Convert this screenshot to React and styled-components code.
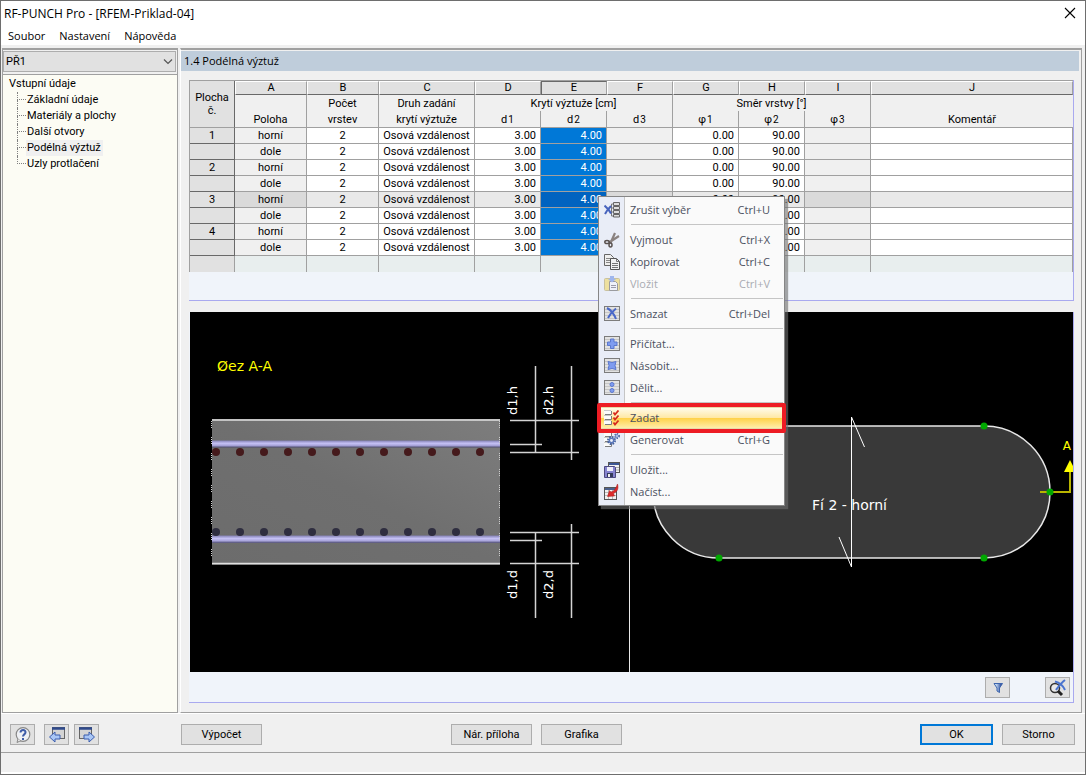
import React, { useState } from 'react';
import styled, { createGlobalStyle } from 'styled-components';

const UI = "Roboto, 'Liberation Sans', sans-serif";
const MENU = "'Open Sans', 'Noto Sans', sans-serif";

const GlobalStyle = createGlobalStyle`
  * {
    box-sizing: border-box;
  }

  body {
    margin: 0;
    background: #f0f0f0;
    color: #000;
    font-family: ${UI};
    font-size: 11px;
  }

  button, select {
    font: inherit;
    color: inherit;
  }
`;

const Window = styled.div`
  position: relative;
  display: flex;
  flex-direction: column;
  min-height: 100vh;
  border: 1px solid #6e6e6e;
  background: #f0f0f0;
`;

const TitleBar = styled.header`
  display: flex;
  align-items: center;
  justify-content: space-between;
  height: 24px;
  padding: 0 9px 0 3px;
  background: #fff;
`;

const Title = styled.h1`
  margin: 0;
  font-family: ${MENU};
  font-size: 12px;
  font-weight: 400;
`;

const CloseButton = styled.button`
  display: flex;
  padding: 0;
  border: 0;
  background: none;
`;

const MenuBar = styled.nav`
  display: flex;
  gap: 14px;
  height: 20px;
  padding: 0 7px;
  background: #fff;

  button {
    padding: 0;
    border: 0;
    background: none;
    font-family: ${MENU};
    font-size: 11px;
  }
`;

const Body = styled.div`
  display: flex;
  flex: 1;
  gap: 2px;
  padding: 3px 3px 0 1px;
`;

const Sidebar = styled.aside`
  display: flex;
  flex-direction: column;
  width: 176px;
  border: 1px solid #a0a0a0;
  border-top-width: 2px;
  background: #f0f0f0;
`;

const CaseBox = styled.div`
  position: relative;
  height: 21px;
  margin: 1px 1px 2px 0;

  svg {
    position: absolute;
    right: 3px;
    top: 7px;
    pointer-events: none;
  }
`;

const CaseSelect = styled.select`
  width: 100%;
  height: 100%;
  padding: 0 2px;
  border: 1px solid #adadad;
  border-radius: 0;
  background: #e1e1e1;
  appearance: none;
`;

const Tree = styled.div`
  flex: 1;
  padding: 1px 6px;
  border-top: 1px solid #a0a0a0;
  background: #fcfcf4;
`;

const TreeRoot = styled.div`
  line-height: 16px;
`;

const TreeList = styled.ul`
  margin: 0;
  padding: 0 0 0 8px;
  list-style: none;
`;

const TreeItem = styled.li`
  display: grid;
  grid-template-columns: 9px auto;
  grid-template-rows: 8px 8px;
  justify-content: start;

  &::before {
    content: '';
    border-left: 1px dotted #808080;
    border-bottom: 1px dotted #808080;
  }

  &:not(:last-child)::after {
    content: '';
    grid-column: 1;
    grid-row: 2;
    border-left: 1px dotted #808080;
  }

  button {
    grid-column: 2;
    grid-row: 1 / 3;
    padding: 0 2px 0 1px;
    border: 0;
    background: ${({ $active }) => ($active ? '#f0f0f0' : 'transparent')};
    line-height: 16px;
    white-space: nowrap;
  }
`;

const Panel = styled.main`
  display: flex;
  flex: 1;
  flex-direction: column;
  min-width: 0;
  border: 1px solid #a0a0a0;
  border-top-width: 2px;
  border-left-color: #fff;
`;

const PanelTitle = styled.h2`
  margin: 1px 2px 9px 0;
  padding: 0 3px;
  background: #bfcddb;
  font-family: ${MENU};
  font-size: 11px;
  font-weight: 400;
  line-height: 20px;
`;

const Frame = styled.section`
  display: flex;
  flex-direction: column;
  flex: ${({ $grow }) => ($grow ? 1 : 'none')};
  margin: 0 7px ${({ $grow }) => ($grow ? 9 : 11)}px 8px;
  border: solid #a9a9ef;
  border-width: 0 1px 1px 0;
  background: #f0f4fa;
`;

const Table = styled.table`
  width: 100%;
  border-left: 1px solid #a0a0a0;
  border-top: 1px solid #a0a0a0;
  border-collapse: separate;
  border-spacing: 0;
  table-layout: fixed;
  font-size: 11px;
  line-height: 15px;
`;

const Letter = styled.th`
  height: 14px;
  padding: 0;
  border: 1px solid;
  border-color: ${({ $pressed }) =>
    $pressed ? '#696969 #a0a0a0 #696969 #696969' : '#fff #a0a0a0 #696969 #fff'};
  background: #e1e1e1;
  font-weight: 400;
  line-height: 12px;
`;

const Corner = styled.th`
  padding: 0;
  border-right: 1px solid #696969;
  border-bottom: 1px solid #a0a0a0;
  background: #e1e1e1;
  font-weight: 400;
  line-height: 13px;
`;

const Head = styled.th`
  height: ${({ $last }) => ($last ? 17 : 16)}px;
  padding: 0;
  border-right: ${({ $open }) => ($open ? 0 : '1px solid #a0a0a0')};
  border-bottom: ${({ $last }) => ($last ? '1px solid #a0a0a0' : 0)};
  background: #f0f0f0;
  font-weight: 400;
  line-height: 15px;
  white-space: nowrap;

  small {
    padding-left: 1px;
    font-size: 10px;
    line-height: 1;
  }
`;

const RowHead = styled.th`
  height: 16px;
  padding: 0;
  border-right: 1px solid #696969;
  border-bottom: 1px solid #696969;
  background: #e1e1e1;
  font-weight: 400;
`;

const cellColor = ({ $kind, $current }) => {
  if ($kind === 'selected') return $current ? '#0063c0' : '#0078d7';
  if ($kind === 'locked') return $current ? '#dadada' : '#f0f0f0';
  if ($kind === 'blank') return '#e8eeee';
  return $current ? '#e9e9e9' : '#fff';
};

const Cell = styled.td`
  height: 16px;
  padding: 0 4px;
  border-right: 1px solid #a0a0a0;
  border-bottom: ${({ $kind }) => ($kind === 'blank' ? 0 : '1px solid #a0a0a0')};
  background: ${cellColor};
  color: ${({ $kind }) => ($kind === 'selected' ? '#fff' : '#000')};
  text-align: ${({ $right }) => ($right ? 'right' : 'center')};
  white-space: nowrap;
`;

const BlankHead = styled(RowHead)`
  border-color: #a0a0a0;
  border-bottom: 0;
`;

const Strip = styled.div`
  height: 28px;
`;

const Graphics = styled.div`
  display: flex;
  flex: 1;
  min-height: 320px;
  margin-left: 1px;
  background: #000;

  svg {
    display: block;
    height: 100%;
    font-family: 'DejaVu Sans', sans-serif;
    font-size: 14px;
  }
`;

const SectionView = styled.div`
  width: 440px;
  border-right: 1px solid #e8e8e8;
`;

const PlanView = styled.div`
  flex: 1;
  min-width: 0;
`;

const GraphicsBar = styled.div`
  display: flex;
  justify-content: flex-end;
  gap: 35px;
  padding: 5px 3px 4px;
`;

const Button = styled.button`
  display: flex;
  align-items: center;
  justify-content: center;
  width: ${({ $width }) => $width || 81}px;
  height: 21px;
  padding: 0;
  border: ${({ $primary }) => ($primary ? '2px solid #0078d7' : '1px solid #adadad')};
  background: #e1e1e1;
`;

const Footer = styled.footer`
  display: flex;
  gap: 9px;
  padding: 10px 10px 7px 9px;
  border-bottom: 1px solid #a0a0a0;
  border-top: 1px solid #fff;
`;

const Group = styled.div`
  display: flex;
  gap: ${({ $gap }) => $gap || 9}px;
  margin-left: ${({ $left }) => $left || 0};
`;

const StatusBar = styled.div`
  height: 21px;
  border-bottom: 2px solid #fff;
`;

const ContextMenu = styled.ul`
  position: absolute;
  left: 597px;
  top: 195px;
  width: 187px;
  margin: 0;
  padding: 2px 1px;
  border: 1px solid #868686;
  background: linear-gradient(to right, #e9edf7 25px, #c5c5c5 25px, #c5c5c5 26px, #fafafa 26px);
  box-shadow: 3px 3px 1px rgba(110, 110, 110, 0.6);
  font-family: ${MENU};
  list-style: none;
`;

const Separator = styled.li`
  height: 8px;
  margin-left: 31px;
  padding-top: 3px;

  &::after {
    content: '';
    display: block;
    height: 1px;
    background: #c5c5c5;
  }
`;

const MenuEntry = styled.li`
  position: relative;

  button {
    display: grid;
    grid-template-columns: 26px 1fr auto;
    align-items: center;
    width: 100%;
    height: 22px;
    padding: 0 13px 0 4px;
    border: 0;
    background: ${({ $hot }) =>
      $hot
        ? 'linear-gradient(#fffdf0, #ffe9a6 48%, #ffd24a 52%, #fff0b5)'
        : 'transparent'};
    box-shadow: ${({ $hot }) => ($hot ? 'inset 0 0 0 1px #e8d9a8' : 'none')};
    color: #4a5060;
    font-size: 11px;
    text-align: left;
  }

  button > span {
    padding-bottom: 2px;
  }

  button:disabled {
    color: #a9abb2;
  }

  button:disabled svg {
    opacity: 0.6;
  }
`;

const Highlight = styled.span`
  position: absolute;
  inset: -4px -3px;
  border: 4px solid #ed1c24;
  border-radius: 2px;
  pointer-events: none;
  z-index: 1;
`;

const svg16 = { width: 16, height: 16, viewBox: '0 0 16 16', 'aria-hidden': true };

const Sheet = ({ children }) => (
  <svg {...svg16}>
    <rect x="0.5" y="0.5" width="15" height="14" fill="#e2e2e2" stroke="#7c7c7c" />
    <path d="M1 3.500h14M1 6.500h14M1 9.500h14M1 12.500h14" stroke="#c6c6c6" />
    {children}
  </svg>
);

const Rows = () => (
  <>
    <path d="M0 0.500h7.500v4H0zM0 5.500h7.500v4H0zM0 10.500h7.500v4H0z" fill="#fbfbfb" />
    <path d="M0 0.500h7M0 5.500h7M0 10.500h7" stroke="#c9c9c9" />
    <path d="M1 4.500h6.500V1M1 9.500h6.500V6M1 14.500h6.500V11" fill="none" stroke="#7d7d7d" />
  </>
);

const icons = {
  clear: (
    <svg {...svg16}>
      <path d="M15.500 0.500H9.500v3h6zM15.500 4.500H9.500v3h6zM15.500 8.500H9.500v3h6zM15.500 12.500H9.500v2.500h6z" fill="#ddd" stroke="#666" />
      <path d="M9 2H7.500v12H9M7.500 6H9M7.500 10H9" fill="none" stroke="#777" />
      <path d="M0.500 3.500c2.500 2 5 5 6.500 8M7 4C5 6 3 8 1 12" fill="none" stroke="#4763bd" strokeWidth="2" />
    </svg>
  ),
  cut: (
    <svg {...svg16}>
      <path d="M5 10.500L15 4M6.500 11L11 1" stroke="#8a8280" strokeWidth="2.200" fill="none" />
      <ellipse cx="3" cy="10" rx="2.200" ry="1.600" fill="none" stroke="#59514f" strokeWidth="1.500" />
      <ellipse cx="6.500" cy="13" rx="1.500" ry="2" fill="none" stroke="#59514f" strokeWidth="1.500" />
    </svg>
  ),
  copy: (
    <svg {...svg16}>
      <path d="M0.500 0.500h6l3 3v8h-9z" fill="#eee" stroke="#666" />
      <path d="M2 4.500h5M2 6.500h5M2 8.500h4" stroke="#888" />
      <path d="M6.500 4.500h6l3 3v8h-9z" fill="#f3f3f3" stroke="#555" />
      <path d="M12.500 4.500v3h3M8 9.500h6M8 11.500h6M8 13.500h6" fill="none" stroke="#777" />
    </svg>
  ),
  paste: (
    <svg {...svg16}>
      <rect x="0.500" y="2.500" width="15" height="12" rx="1" fill="#f0d866" stroke="#b3a567" />
      <path d="M5.500 5.500h6l2 2v7h-8z" fill="#f4f6fb" stroke="#666" />
      <path d="M7 9.500h5M7 11.500h5" stroke="#667" />
      <path d="M6 0h4v3h2L8 6.500 4 3h2z" fill="#6f92e8" />
    </svg>
  ),
  erase: (
    <Sheet>
      <path d="M3 2c4 2 7 6 9 11M12 2.500C9 5 6 8 4 12" fill="none" stroke="#4a68c8" strokeWidth="2" />
    </Sheet>
  ),
  add: (
    <Sheet>
      <path d="M6.500 3h3.500v3h3v3.500h-3v3H6.500v-3h-3V6h3z" fill="#7f9cf0" stroke="#5b78cf" />
    </Sheet>
  ),
  multiply: (
    <Sheet>
      <path d="M4 3.500l4 1 4-1-1 4 1 4-4-1-4 1 1-4z" fill="#7f9cf0" stroke="#5b78cf" strokeLinejoin="round" />
    </Sheet>
  ),
  divide: (
    <Sheet>
      <circle cx="8" cy="4.500" r="2" fill="#7f9cf0" stroke="#5b78cf" />
      <circle cx="8" cy="10.500" r="2" fill="#7f9cf0" stroke="#5b78cf" />
    </Sheet>
  ),
  set: (
    <svg {...svg16}>
      <Rows />
      <path d="M9.500 2.500l1.500 2 3.500-4M9.500 7.500l1.500 2 3.500-4M9.500 12.500l1.500 2 3.500-4" fill="none" stroke="#d8291e" strokeWidth="1.800" />
    </svg>
  ),
  generate: (
    <svg {...svg16}>
      <Rows />
      <circle cx="7.500" cy="8.500" r="3.500" fill="none" stroke="#45629f" strokeWidth="2" strokeDasharray="1.600 1.150" />
      <circle cx="7.500" cy="8.500" r="2.200" fill="#eef2fb" stroke="#5a77ba" strokeWidth="1.500" />
      <circle cx="13" cy="4" r="2.200" fill="none" stroke="#45629f" strokeWidth="1.500" strokeDasharray="1.200 1.100" />
      <circle cx="13" cy="4" r="1.400" fill="#eef2fb" stroke="#5a77ba" />
    </svg>
  ),
  save: (
    <svg {...svg16}>
      <rect x="4.500" y="0.500" width="11" height="10" fill="#f2f2f2" stroke="#555" />
      <path d="M5 2h10" stroke="#3d5794" strokeWidth="2" />
      <path d="M11 5.500h4M11 8h4" stroke="#aaa" />
      <path d="M0.500 4.500h10l1 1v10h-11z" fill="#8583cf" stroke="#4d4a80" />
      <rect x="3" y="5" width="6" height="4" fill="#eeeefa" />
      <rect x="3" y="11" width="6" height="4" fill="#333a5a" />
      <rect x="4" y="12" width="2" height="3" fill="#eee" />
    </svg>
  ),
  load: (
    <svg {...svg16}>
      <rect x="0.500" y="3.500" width="12" height="12" fill="#f2f2f2" stroke="#555" />
      <path d="M1 5h11" stroke="#4a5f8c" strokeWidth="2" />
      <path d="M1 8.500h11M1 11.500h11M4.500 6v9M8.500 6v9" stroke="#bbb" />
      <path d="M13.500 0c1.500 5-.5 8-4 9.500l1 2.500-7 .5L5.500 6.500 7 8c3.500-1 5-4 6.500-8z" fill="#dc2b2b" stroke="#a51c1c" strokeWidth="0.500" />
    </svg>
  ),
};

const menuItems = [
  { icon: 'clear', label: 'Zrušit výběr', keys: 'Ctrl+U' },
  null,
  { icon: 'cut', label: 'Vyjmout', keys: 'Ctrl+X' },
  { icon: 'copy', label: 'Kopírovat', keys: 'Ctrl+C' },
  { icon: 'paste', label: 'Vložit', keys: 'Ctrl+V', disabled: true },
  null,
  { icon: 'erase', label: 'Smazat', keys: 'Ctrl+Del' },
  null,
  { icon: 'add', label: 'Přičítat...' },
  { icon: 'multiply', label: 'Násobit...' },
  { icon: 'divide', label: 'Dělit...' },
  null,
  { icon: 'set', label: 'Zadat', hot: true },
  { icon: 'generate', label: 'Generovat', keys: 'Ctrl+G' },
  null,
  { icon: 'save', label: 'Uložit...' },
  { icon: 'load', label: 'Načíst...' },
];

const treeItems = ['Základní údaje', 'Materiály a plochy', 'Další otvory', 'Podélná výztuž', 'Uzly protlačení'];

const letters = ['A', 'B', 'C', 'D', 'E', 'F', 'G', 'H', 'I', 'J'];
const columns = [45, 72, 72, 96, 66, 66, 66, 66, 66, 66];

const rows = [1, 2, 3, 4].flatMap((n) => [
  { surface: n, position: 'horní', current: n === 3 },
  { surface: '', position: 'dole' },
]);

const DataTable = () => (
  <Table>
    <colgroup>
      {columns.map((width, i) => (
        <col key={i} width={width} />
      ))}
      <col />
    </colgroup>
    <thead>
      <tr>
        <Corner rowSpan={3}>
          Plocha
          <br />
          č.
        </Corner>
        {letters.map((l) => (
          <Letter key={l} $pressed={l === 'E'}>{l}</Letter>
        ))}
      </tr>
      <tr>
        <Head />
        <Head>Počet</Head>
        <Head>Druh zadání</Head>
        <Head colSpan={3}>Krytí výztuže [cm]</Head>
        <Head colSpan={3}>Směr vrstvy [°]</Head>
        <Head $open />
      </tr>
      <tr>
        <Head $last>Poloha</Head>
        <Head $last>vrstev</Head>
        <Head $last>krytí výztuže</Head>
        {['d', 'φ'].map((symbol) =>
          [1, 2, 3].map((n) => (
            <Head key={symbol + n} $last>
              {symbol}
              <small>{n}</small>
            </Head>
          ))
        )}
        <Head $last $open>Komentář</Head>
      </tr>
    </thead>
    <tbody>
      {rows.map(({ surface, position, current }, i) => (
        <tr key={i}>
          <RowHead scope="row">{surface}</RowHead>
          <Cell $kind="locked" $current={current}>{position}</Cell>
          <Cell $current={current}>2</Cell>
          <Cell $current={current}>Osová vzdálenost</Cell>
          <Cell $current={current} $right>3.00</Cell>
          <Cell $kind="selected" $current={current} $right>4.00</Cell>
          <Cell $kind="locked" $current={current} />
          <Cell $current={current} $right>0.00</Cell>
          <Cell $current={current} $right>90.00</Cell>
          <Cell $kind="locked" $current={current} />
          <Cell $current={current} />
        </tr>
      ))}
      <tr>
        <BlankHead />
        {letters.map((l) => (
          <Cell key={l} $kind="blank" />
        ))}
      </tr>
    </tbody>
  </Table>
);

const bars = Array.from({ length: 12 }, (_, i) => 26 + i * 24);

const SectionDrawing = () => (
  <svg width="439" role="img" aria-label="Řez A-A">
    <defs>
      <linearGradient id="concrete" x1="0" y1="1" x2="1" y2="0">
        <stop offset="0" stopColor="#6c6c6c" />
        <stop offset="0.5" stopColor="#6f6f6f" />
        <stop offset="1" stopColor="#7d7d7d" />
      </linearGradient>
      <linearGradient id="rebar" x1="0" y1="0" x2="0" y2="1">
        <stop offset="0" stopColor="#8380b4" />
        <stop offset="0.4" stopColor="#c4c0f4" />
        <stop offset="0.7" stopColor="#aaa6dc" />
        <stop offset="1" stopColor="#4e4c70" />
      </linearGradient>
      <clipPath id="slab">
        <rect x="22" y="107" width="288" height="146" />
      </clipPath>
    </defs>
    <text x="27" y="59" fill="#ff0">Øez A-A</text>
    <g clipPath="url(#slab)">
      <rect x="22" y="107" width="288" height="146" fill="url(#concrete)" />
      <path d="M22 108h288M22 251.500h288" stroke="#e0e0e0" strokeWidth="1.500" />
      <rect x="22" y="128.500" width="288" height="7" fill="url(#rebar)" />
      <rect x="22" y="223.500" width="288" height="7.500" fill="url(#rebar)" />
      {bars.map((x) => (
        <g key={x}>
          <circle cx={x} cy="140" r="4" fill="#451a1c" />
          <circle cx={x} cy="220" r="4" fill="#2f2e40" />
        </g>
      ))}
    </g>
    <path d="M21.500 109v142M309.500 109v142" stroke="#ccc" strokeDasharray="1 1 1 1 1 1 1 9" />
    <path
      d="M320 108.500h69M320 132.500h32M320 140.500h69M345.500 54v87M381.500 54v94M320 220.500h69M320 228.500h32M320 251.500h69M345.500 220v86M381.500 212v94"
      stroke="#d4d4d4"
      strokeWidth="1.500"
      fill="none"
    />
    <g fill="#fff" fontSize="13">
      <text transform="translate(327 103) rotate(-90)">d1,h</text>
      <text transform="translate(363 103) rotate(-90)">d2,h</text>
      <text transform="translate(327 287) rotate(-90)">d1,d</text>
      <text transform="translate(363 287) rotate(-90)">d2,d</text>
    </g>
  </svg>
);

const PlanDrawing = () => (
  <svg width="100%" role="img" aria-label="Fí 2 - horní">
    <path
      d="M89 114h265a66 66 0 0 1 0 132H89a66 66 0 0 1 0-132z"
      fill="#393939"
      stroke="#e8e8e8"
      strokeWidth="1.500"
    />
    <path d="M221.500 255V105l13 30M209 225l12.500 30" fill="none" stroke="#fff" />
    <text x="182" y="198" fill="#fff">Fí 2 - horní</text>
    <path d="M410 180h30V160" fill="none" stroke="#b8b400" strokeWidth="2" />
    <path d="M440 148l-6 12h12z" fill="#ff0" />
    <text x="441" y="138" fill="#ff0" fontSize="12" textAnchor="end">A</text>
    {[[89, 246], [354, 114], [354, 246], [420, 180]].map(([x, y]) => (
      <circle key={`${x}-${y}`} cx={x} cy={y} r="3.500" fill="#00a800" />
    ))}
  </svg>
);

const HelpIcon = () => (
  <svg {...svg16}>
    <circle cx="8" cy="7.500" r="6.800" fill="#eef0f4" stroke="#888" strokeWidth="1.200" />
    <path d="M3 12l-1 3.500 4-2" fill="#eee" stroke="#888" />
    <path d="M5.500 5.500c0-3.500 5.500-3 5 0-.3 2-2.500 1.800-2.500 4M8 11v2" fill="none" stroke="#3f5da8" strokeWidth="2" />
  </svg>
);

const PageIcon = ({ next }) => (
  <svg {...svg16}>
    <g transform={next ? 'translate(16 0) scale(-1 1)' : undefined}>
      <rect x="3.500" y="0.500" width="12" height="11" fill="#d4d4d4" stroke="#666" />
      <path d="M3 1.500h13" stroke="#2f4a8c" strokeWidth="2.500" />
      <path d="M0.500 10L6 5v3h5v4H6v3z" fill="#a9c6f5" stroke="#3a5cae" />
    </g>
  </svg>
);

const FilterIcon = () => (
  <svg {...svg16}>
    <defs>
      <linearGradient id="funnel">
        <stop offset="0.2" stopColor="#d3e8fb" />
        <stop offset="0.9" stopColor="#1f3f94" />
      </linearGradient>
    </defs>
    <path d="M4 3.500h8.500L9.500 8v4.500L7 11V8z" fill="url(#funnel)" stroke="#3c64ad" />
  </svg>
);

const ZoomOffIcon = () => (
  <svg width="18" height="18" viewBox="0 0 18 18" aria-hidden="true">
    <circle cx="6" cy="9" r="4.500" fill="#e8e8e8" stroke="#333" strokeWidth="1.500" />
    <path d="M9 12l4 4" stroke="#222" strokeWidth="3" />
    <path d="M6 2.500c4 1 8 4 10 8.500M16 1c-4 3-6 6-9 10" fill="none" stroke="#4a74cf" strokeWidth="2" />
  </svg>
);

const App = () => {
  const [active, setActive] = useState('Podélná výztuž');

  return (
    <>
      <GlobalStyle />
      <Window>
        <TitleBar>
          <Title>RF-PUNCH Pro - [RFEM-Priklad-04]</Title>
          <CloseButton aria-label="Zavřít">
            <svg width="12" height="12" viewBox="0 0 12 12" aria-hidden="true">
              <path d="M1 1l10 10M11 1L1 11" stroke="#000" strokeWidth="1.100" />
            </svg>
          </CloseButton>
        </TitleBar>
        <MenuBar>
          <button>Soubor</button>
          <button>Nastavení</button>
          <button>Nápověda</button>
        </MenuBar>

        <Body>
          <Sidebar>
            <CaseBox>
              <CaseSelect aria-label="Případ" defaultValue="PŘ1">
                <option>PŘ1</option>
              </CaseSelect>
              <svg width="10" height="8" viewBox="0 0 10 8" aria-hidden="true">
                <path d="M1 1.500l4 4 4-4" fill="none" stroke="#555" strokeWidth="1.200" />
              </svg>
            </CaseBox>
            <Tree>
              <TreeRoot>Vstupní údaje</TreeRoot>
              <TreeList>
                {treeItems.map((item) => (
                  <TreeItem key={item} $active={item === active}>
                    <button onClick={() => setActive(item)}>{item}</button>
                  </TreeItem>
                ))}
              </TreeList>
            </Tree>
          </Sidebar>

          <Panel>
            <PanelTitle>1.4 Podélná výztuž</PanelTitle>
            <Frame>
              <DataTable />
              <Strip />
            </Frame>
            <Frame $grow>
              <Graphics>
                <SectionView>
                  <SectionDrawing />
                </SectionView>
                <PlanView>
                  <PlanDrawing />
                </PlanView>
              </Graphics>
              <GraphicsBar>
                <Button $width={25} aria-label="Filtr"><FilterIcon /></Button>
                <Button $width={25} aria-label="Zrušit zvětšení"><ZoomOffIcon /></Button>
              </GraphicsBar>
            </Frame>
          </Panel>
        </Body>

        <Footer>
          <Button $width={25} aria-label="Nápověda"><HelpIcon /></Button>
          <Group $gap={5}>
            <Button $width={25} aria-label="Předchozí"><PageIcon /></Button>
            <Button $width={25} aria-label="Další"><PageIcon next /></Button>
          </Group>
          <Group $left="73px">
            <Button>Výpočet</Button>
          </Group>
          <Group $left="180px">
            <Button>Nár. příloha</Button>
            <Button>Grafika</Button>
          </Group>
          <Group $left="auto">
            <Button $width={73} $primary>OK</Button>
            <Button $width={73}>Storno</Button>
          </Group>
        </Footer>
        <StatusBar />

        <ContextMenu role="menu">
          {menuItems.map((item, i) =>
            item ? (
              <MenuEntry key={item.label} $hot={item.hot} role="none">
                {item.hot && <Highlight />}
                <button role="menuitem" disabled={item.disabled}>
                  {icons[item.icon]}
                  <span>{item.label}</span>
                  <span>{item.keys}</span>
                </button>
              </MenuEntry>
            ) : (
              <Separator key={i} role="separator" />
            )
          )}
        </ContextMenu>
      </Window>
    </>
  );
};

export default App;
